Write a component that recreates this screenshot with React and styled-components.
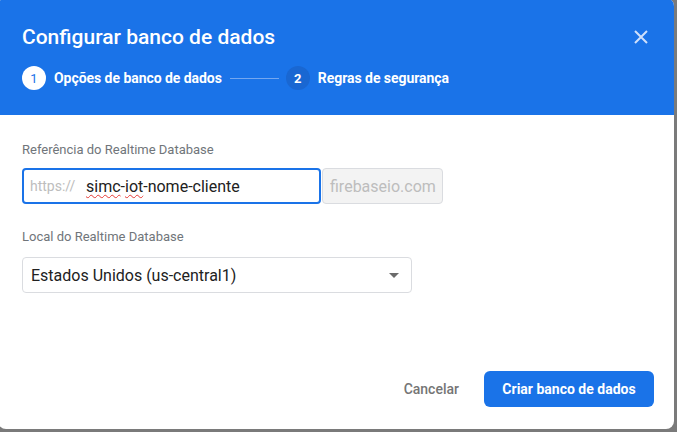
import React from "react";
import styled, { createGlobalStyle } from "styled-components";

const GlobalStyle = createGlobalStyle`
  html, body {
    margin: 0;
    padding: 0;
    background: #7a7a7a;
    overflow: hidden;
  }
  body {
    font-family: Roboto, "Liberation Sans", Arial, sans-serif;
  }
`;

const Dialog = styled.div`
  margin: -2px 0 0 -2px;
  width: 676px;
  height: 431px;
  background: #ffffff;
  border-radius: 8px;
  overflow: hidden;
  display: flex;
  flex-direction: column;
`;

const Header = styled.header`
  background: #1a73e8;
  height: 117px;
  box-sizing: border-box;
  padding: 27px 24px 0 24px;
  display: flex;
  flex-direction: column;
`;

const TitleRow = styled.div`
  display: flex;
  align-items: center;
  justify-content: space-between;
  height: 24px;
`;

const Title = styled.h1`
  margin: 0;
  font-size: 21px;
  line-height: 24px;
  font-weight: 500;
  color: #ffffff;
`;

const CloseButton = styled.button`
  border: none;
  background: none;
  padding: 0;
  margin-right: 1px;
  width: 16px;
  height: 16px;
  display: flex;
  cursor: pointer;
`;

const Stepper = styled.ol`
  list-style: none;
  margin: 17px 0 0 0;
  padding: 0;
  display: flex;
  align-items: center;
  height: 24px;
`;

const Step = styled.li`
  display: flex;
  align-items: center;
  gap: 8px;
`;

const StepNumber = styled.span`
  width: 24px;
  height: 24px;
  border-radius: 50%;
  display: flex;
  align-items: center;
  justify-content: center;
  font-size: 13px;
  font-weight: ${(p) => (p.$active ? 400 : 700)};
  background: ${(p) => (p.$active ? "#ffffff" : "#1967d2")};
  color: ${(p) => (p.$active ? "#1a73e8" : "#ffffff")};
`;

const StepLabel = styled.span`
  font-size: 14px;
  font-weight: 700;
  color: #ffffff;
  letter-spacing: -0.05px;
`;

const Connector = styled.span`
  width: 49px;
  height: 1px;
  background: #74a7f0;
  margin: 0 7px 0 8px;
`;

const Body = styled.main`
  flex: 1;
  padding: 27px 24px 0 24px;
  display: flex;
  flex-direction: column;
`;

const Field = styled.div`
  display: flex;
  flex-direction: column;
  margin-bottom: ${(p) => p.$gap || 0}px;
`;

const Label = styled.label`
  font-size: 13px;
  line-height: 16px;
  color: #70757a;
  margin-bottom: ${(p) => p.$space}px;
`;

const InputGroup = styled.div`
  display: flex;
  gap: 1px;
`;

const UrlBox = styled.div`
  width: 299px;
  height: 36px;
  box-sizing: border-box;
  border: 2px solid #1a73e8;
  border-radius: 4px;
  display: flex;
  align-items: center;
  padding-left: 6px;
  font-size: 16px;
`;

const Prefix = styled.span`
  color: #bdbdbd;
  font-size: 14px;
  width: 56px;
`;

const Value = styled.span`
  color: #212121;
`;

const Typo = styled.span`
  text-decoration: underline wavy #e53935;
  text-decoration-thickness: 1px;
  text-underline-offset: 2px;
`;

const Suffix = styled.div`
  width: 121px;
  height: 36px;
  box-sizing: border-box;
  border: 1px solid #dadce0;
  border-radius: 4px;
  background: #f3f3f3;
  color: #bdbdbd;
  font-size: 16px;
  display: flex;
  align-items: center;
  padding-left: 7px;
`;

const Select = styled.div`
  width: 390px;
  height: 36px;
  box-sizing: border-box;
  border: 1px solid #dadce0;
  border-radius: 4px;
  display: flex;
  align-items: center;
  justify-content: space-between;
  padding: 0 12px 0 8px;
  font-size: 16px;
  color: #212121;
`;

const Caret = styled.span`
  width: 0;
  height: 0;
  border-left: 5px solid transparent;
  border-right: 5px solid transparent;
  border-top: 5px solid #6b6b6b;
`;

const Footer = styled.footer`
  display: flex;
  justify-content: flex-end;
  align-items: center;
  gap: 25px;
  padding: 0 20px 22px 0;
`;

const TextButton = styled.button`
  border: none;
  background: none;
  font-family: inherit;
  font-size: 14px;
  font-weight: 500;
  color: #757575;
  padding: 0;
  cursor: pointer;
`;

const PrimaryButton = styled.button`
  border: none;
  background: #1a73e8;
  color: #ffffff;
  font-family: inherit;
  font-size: 14px;
  font-weight: 700;
  height: 36px;
  width: 170px;
  border-radius: 6px;
  cursor: pointer;
`;

export default function App() {
  return (
    <>
      <GlobalStyle />
      <Dialog>
        <Header>
          <TitleRow>
            <Title>Configurar banco de dados</Title>
            <CloseButton aria-label="Fechar">
              <svg width="16" height="16" viewBox="0 0 16 16">
                <path
                  d="M2 2 L14 14 M14 2 L2 14"
                  stroke="#cfe0fb"
                  strokeWidth="2"
                  fill="none"
                />
              </svg>
            </CloseButton>
          </TitleRow>
          <Stepper>
            <Step>
              <StepNumber $active>1</StepNumber>
              <StepLabel>Opções de banco de dados</StepLabel>
            </Step>
            <Connector />
            <Step>
              <StepNumber>2</StepNumber>
              <StepLabel>Regras de segurança</StepLabel>
            </Step>
          </Stepper>
        </Header>
        <Body>
          <Field $gap={25}>
            <Label $space={10}>Referência do Realtime Database</Label>
            <InputGroup>
              <UrlBox>
                <Prefix>https://</Prefix>
                <Value>
                  <Typo>simc</Typo>-<Typo>iot</Typo>-nome-cliente
                </Value>
              </UrlBox>
              <Suffix>firebaseio.com</Suffix>
            </InputGroup>
          </Field>
          <Field>
            <Label $space={12}>Local do Realtime Database</Label>
            <Select>
              <span>Estados Unidos (us-central1)</span>
              <Caret />
            </Select>
          </Field>
        </Body>
        <Footer>
          <TextButton>Cancelar</TextButton>
          <PrimaryButton>Criar banco de dados</PrimaryButton>
        </Footer>
      </Dialog>
    </>
  );
}
